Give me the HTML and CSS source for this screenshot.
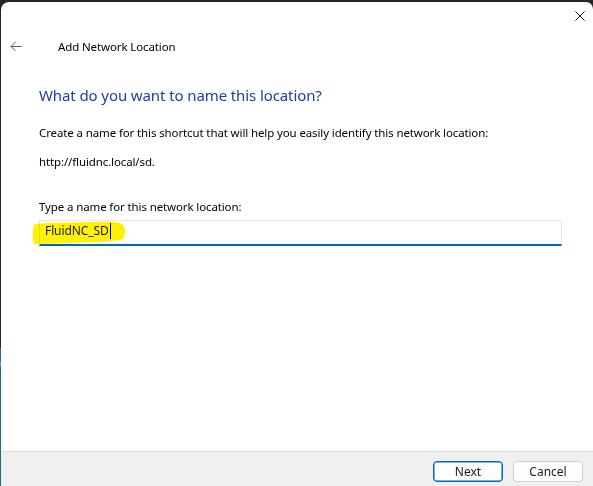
FILE: index.html
```html
<!DOCTYPE html>
<html>
<head>
<meta charset="utf-8">
<link rel="stylesheet" href="styles.css">
</head>
<body>
<div class="window">
  <div class="titlebar">
    <svg class="close" width="10" height="10" viewBox="0 0 10 10"><path d="M0.5 0.5 L9.5 9.5 M9.5 0.5 L0.5 9.5" stroke="#1a1a1a" stroke-width="1" fill="none"/></svg>
  </div>
  <div class="header">
    <svg class="back" width="12" height="11" viewBox="0 0 12 11"><path d="M11.5 5.5 H1 M5.5 1 L1 5.5 L5.5 10" stroke="#5c5c5c" stroke-width="1" fill="none"/></svg>
    <span class="title">Add Network Location</span>
  </div>
  <div class="content">
    <h1 class="heading">What do you want to name this location?</h1>
    <p class="desc">Create a name for this shortcut that will help you easily identify this network location:</p>
    <p class="url">http://fluidnc.local/sd.</p>
    <div class="label">Type a name for this network location:</div>
    <div class="field">
      <svg class="marker" width="96" height="24" viewBox="0 0 96 24"><path d="M3 3 Q20 1 40 1.5 Q70 0.5 84 1 Q92 2 93 9 Q93 17 89 19 Q70 21 50 21.5 Q25 22.5 2 23 Q0 17 1 10 Q1 4 3 3 Z" fill="#fff200"/></svg>
      <span class="value">FluidNC_SD</span><span class="caret"></span>
    </div>
  </div>
  <div class="footer">
    <button class="btn primary">Next</button>
    <button class="btn">Cancel</button>
  </div>
</div>
</body>
</html>
```
FILE: styles.css
```css
html, body {
  margin: 0;
  padding: 0;
}
body {
  width: 593px;
  height: 486px;
  overflow: hidden;
  padding-top: 2px;
  box-sizing: border-box;
  background: linear-gradient(to bottom, #252525 0, #252525 348px, #1c6fb4 348px, #1c6fb4 362px, #8a8a8a 362px, #8a8a8a 367px, #1d7377 367px, #1d7377 100%);
  font-family: "Noto Sans", "Liberation Sans", sans-serif;
  font-size: 11.5px;
  letter-spacing: -0.12px;
  color: #000;
}
.window {
  margin-left: 1px;
  width: 592px;
  height: 484px;
  background: #fff;
  border-radius: 8px 7px 0 0;
  display: flex;
  flex-direction: column;
  position: relative;
}
.titlebar {
  height: 10px;
  padding-top: 9px;
  display: flex;
  justify-content: flex-end;
  padding-right: 8px;
}
.close {
  display: block;
}
.header {
  margin-top: 17px;
  height: 16px;
  display: flex;
  align-items: center;
  padding-left: 9px;
}
.back {
  display: block;
  margin-top: 1px;
}
.title {
  line-height: 16px;
  margin-left: 36px;
  padding-top: 1px;
  color: #000;
}
.content {
  padding-left: 38px;
  padding-right: 31px;
}
.heading {
  margin: 31px 0 0 0;
  font-size: 15px;
  letter-spacing: -0.1px;
  font-weight: normal;
  line-height: 21px;
  color: #1e3ea6;
}
.desc {
  margin: 19px 0 0 0;
  line-height: 16px;
}
.url {
  margin: 13px 0 0 0;
  line-height: 16px;
}
.label {
  margin-top: 29px;
  line-height: 16px;
}
.field {
  margin-top: 5px;
  height: 26px;
  box-sizing: border-box;
  border: 1px solid #e6e6e6;
  border-bottom: 2px solid #0067c0;
  padding: 2px 5px;
  line-height: 16px;
  position: relative;
  display: flex;
  align-items: flex-start;
  color: #1a1a1a;
}
.marker {
  position: absolute;
  left: -8px;
  top: 0px;
  mix-blend-mode: multiply;
}
.value {
  position: relative;
  font-size: 12px;
  letter-spacing: -0.1px;
}
.caret {
  display: inline-block;
  width: 1px;
  height: 16px;
  background: #000;
  margin-left: 1px;
  position: relative;
}
.footer {
  margin-top: auto;
  border-top: 1px solid #dfdfdf;
  background: #f0f0f0;
  display: flex;
  justify-content: flex-end;
  align-items: flex-start;
  padding-top: 9px;
  padding-right: 10px;
  gap: 10px;
  box-sizing: border-box;
  height: 35px;
}
.btn {
  width: 70px;
  height: 21px;
  box-sizing: border-box;
  background: #fdfdfd;
  border: 1px solid #d0d0d0;
  border-radius: 4px;
  font-family: "Noto Sans", "Liberation Sans", sans-serif;
  font-size: 12px;
  line-height: 16px;
  padding: 0;
  color: #1a1a1a;
}
.btn.primary {
  border: 1px solid #0067c0;
  box-shadow: inset 0 0 0 0.5px #0067c0;
}
```
